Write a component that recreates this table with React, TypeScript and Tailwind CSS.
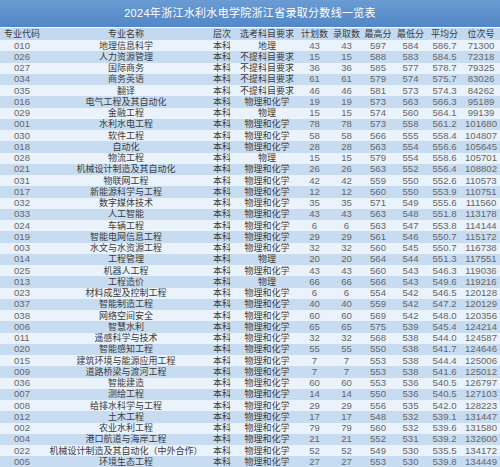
import React from "react";

type Row = [string, string, string, string, number, number, number, number, string, number];

const rows: Row[] = [
  ["010", "地理信息科学", "本科", "地理", 43, 43, 597, 584, "586.7", 71300],
  ["026", "人力资源管理", "本科", "不提科目要求", 15, 15, 588, 583, "584.5", 72318],
  ["027", "国际商务", "本科", "不提科目要求", 36, 36, 585, 577, "578.7", 79325],
  ["034", "商务英语", "本科", "不提科目要求", 61, 61, 579, 574, "575.7", 83026],
  ["035", "翻译", "本科", "不提科目要求", 46, 46, 581, 573, "574.3", 84262],
  ["016", "电气工程及其自动化", "本科", "物理和化学", 19, 19, 573, 563, "566.3", 95189],
  ["029", "金融工程", "本科", "物理", 15, 15, 574, 560, "564.1", 99139],
  ["001", "水利水电工程", "本科", "物理和化学", 78, 78, 573, 558, "561.2", 101680],
  ["030", "软件工程", "本科", "物理和化学", 58, 58, 566, 555, "558.4", 104807],
  ["018", "自动化", "本科", "物理和化学", 28, 28, 563, 554, "556.6", 105645],
  ["028", "物流工程", "本科", "物理", 15, 15, 579, 554, "558.6", 105701],
  ["021", "机械设计制造及其自动化", "本科", "物理和化学", 26, 26, 563, 552, "556.4", 108802],
  ["031", "物联网工程", "本科", "物理和化学", 42, 42, 559, 550, "552.6", 110573],
  ["017", "新能源科学与工程", "本科", "物理和化学", 12, 12, 560, 550, "553.9", 110751],
  ["032", "数字媒体技术", "本科", "物理和化学", 35, 35, 571, 549, "555.6", 111560],
  ["033", "人工智能", "本科", "物理和化学", 43, 43, 563, 548, "551.8", 113178],
  ["024", "车辆工程", "本科", "物理和化学", 6, 6, 563, 547, "553.8", 114144],
  ["019", "智能电网信息工程", "本科", "物理和化学", 29, 29, 561, 546, "550.7", 115172],
  ["003", "水文与水资源工程", "本科", "物理和化学", 32, 32, 560, 545, "550.7", 116738],
  ["014", "工程管理", "本科", "物理", 20, 20, 564, 544, "551.3", 117551],
  ["025", "机器人工程", "本科", "物理和化学", 43, 43, 560, 543, "546.3", 119036],
  ["013", "工程造价", "本科", "物理", 66, 66, 566, 543, "549.6", 119216],
  ["023", "材料成型及控制工程", "本科", "物理和化学", 6, 6, 554, 542, "546.5", 120128],
  ["037", "智能制造工程", "本科", "物理和化学", 40, 40, 559, 542, "547.2", 120129],
  ["038", "网络空间安全", "本科", "物理和化学", 60, 60, 569, 542, "548.0", 120356],
  ["006", "智慧水利", "本科", "物理和化学", 65, 65, 575, 539, "545.4", 124214],
  ["011", "遥感科学与技术", "本科", "物理和化学", 32, 32, 568, 538, "544.0", 124587],
  ["020", "智能感知工程", "本科", "物理和化学", 55, 55, 550, 538, "541.7", 124646],
  ["015", "建筑环境与能源应用工程", "本科", "物理和化学", 7, 7, 553, 538, "544.4", 125006],
  ["009", "道路桥梁与渡河工程", "本科", "物理和化学", 7, 7, 553, 538, "541.6", 125012],
  ["036", "智能建造", "本科", "物理和化学", 60, 60, 553, 536, "540.5", 126797],
  ["007", "测绘工程", "本科", "物理和化学", 14, 14, 550, 536, "540.5", 127103],
  ["008", "给排水科学与工程", "本科", "物理和化学", 29, 29, 556, 535, "542.0", 128223],
  ["012", "土木工程", "本科", "物理和化学", 17, 17, 548, 532, "539.1", 131447],
  ["002", "农业水利工程", "本科", "物理和化学", 79, 79, 560, 532, "539.6", 131580],
  ["004", "港口航道与海岸工程", "本科", "物理和化学", 21, 21, 552, 531, "539.2", 132600],
  ["022", "机械设计制造及其自动化（中外合作）", "本科", "物理和化学", 52, 52, 549, 530, "535.5", 134172],
  ["005", "环境生态工程", "本科", "物理和化学", 27, 27, 553, 530, "539.8", 134449],
];

const headers = ["专业代码", "专业名称", "层次", "选考科目要求", "计划数", "录取数", "最高分", "最低分", "平均分", "位次号"];

const cols = "grid grid-cols-[44px_164px_28px_62px_33px_31px_32px_33px_35px_38px]";

export default function App() {
  return (
    <div
      className="w-[500px] h-[467px] overflow-hidden bg-white"
      style={{ fontFamily: '"Liberation Sans", "Noto Sans CJK SC", sans-serif' }}
    >
      {/* title */}
      <div className="h-[28px] flex items-center justify-center bg-gradient-to-b from-[#6a9bd3] to-[#5287c6] text-white text-[11px] tracking-[0.3px] border-b border-white">
        2024年浙江水利水电学院浙江省录取分数线一览表
      </div>
      {/* header */}
      <div className={`${cols} h-[12px] items-center bg-[#c3d9f0] text-[#3a3a3a] text-[9px] leading-[10px]`}>
        {headers.map((h) => (
          <div key={h} className="text-center whitespace-nowrap">
            {h}
          </div>
        ))}
      </div>
      {rows.map((r, i) => (
        <div
          key={r[0]}
          className={`${cols} h-[11.25px] items-center text-[9.6px] leading-[10px] text-[#666] ${
            i % 2 === 0 ? "bg-[#eaf2fb]" : "bg-[#c8dcf1]"
          }`}
        >
          <div className="text-center">{r[0]}</div>
          <div className="text-center text-[9px] text-[#3a3a3a] whitespace-nowrap">{r[1]}</div>
          <div className="text-center text-[9px] text-[#3a3a3a]">{r[2]}</div>
          <div className="text-center text-[9px] text-[#3a3a3a] whitespace-nowrap">{r[3]}</div>
          <div className="text-center">{r[4]}</div>
          <div className="text-center">{r[5]}</div>
          <div className="text-center">{r[6]}</div>
          <div className="text-center">{r[7]}</div>
          <div className="text-center">{r[8]}</div>
          <div className="text-center">{r[9]}</div>
        </div>
      ))}
    </div>
  );
}
